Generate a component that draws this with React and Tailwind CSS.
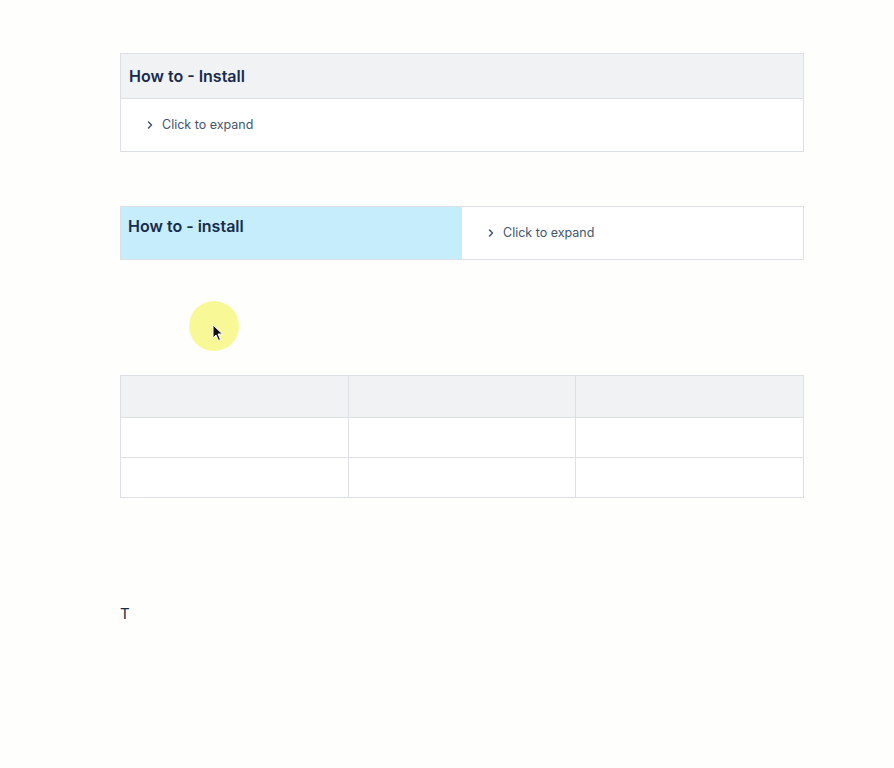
import { ChevronRight } from 'lucide-react';

const Expand = ({ className = '' }) => (
  <div className={`flex items-center gap-[6px] text-[12.5px] text-[#44546f] ${className}`}>
    <ChevronRight className="h-3 w-3 text-[#44546f]" strokeWidth={3} />
    <span>Click to expand</span>
  </div>
);

const App = () => {
  const rows = [0, 1];
  const cols = [0, 1, 2];

  return (
    <div className="min-h-[768px] bg-[#fefefd] font-['Inter','Liberation_Sans',sans-serif] text-[#172b4d]">
      <div className="ml-[120px] w-[684px] pt-[53px]">
        {/* panel with header */}
        <div className="border border-[#dcdfe4] bg-white">
          <div className="flex h-[45px] items-center border-b border-[#dcdfe4] bg-[#f1f2f4] px-2">
            <h2 className="text-[16px] font-semibold">How to - Install</h2>
          </div>
          <div className="flex h-[52px] items-center px-[23px]">
            <Expand />
          </div>
        </div>

        {/* side by side layout */}
        <div className="mt-[54px] flex h-[54px] border border-[#dcdfe4] bg-white">
          <div className="w-1/2 bg-[#c6edfb] px-[7px] pt-[7px]">
            <h2 className="text-[16px] font-semibold">How to - install</h2>
          </div>
          <div className="flex w-1/2 items-center px-[23px]">
            <Expand />
          </div>
        </div>

        {/* click highlight */}
        <div className="h-[115px] pl-[69px] pt-[41px]">
          <div className="relative h-[50px] w-[50px] rounded-full bg-[#f8f996]">
            <svg className="absolute left-[23px] top-[23px]" width="12" height="18" viewBox="0 0 12 18">
              <path d="M1 1 L1 14 L4 11 L6.5 16.5 L8.5 15.5 L6 10 L10.5 10 Z" fill="#111" stroke="#fff" strokeWidth="1" />
            </svg>
          </div>
        </div>

        {/* table */}
        <table className="w-full table-fixed border-collapse">
          <thead>
            <tr className="h-[42px] bg-[#f1f2f4]">
              {cols.map((c) => (
                <th key={c} className="border border-[#dcdfe4]" />
              ))}
            </tr>
          </thead>
          <tbody>
            {rows.map((r) => (
              <tr key={r} className="h-[40px] bg-white">
                {cols.map((c) => (
                  <td key={c} className="border border-[#dcdfe4]" />
                ))}
              </tr>
            ))}
          </tbody>
        </table>

        <p className="mt-[105px] text-[15px]">T</p>
      </div>
    </div>
  );
};

export default App;
